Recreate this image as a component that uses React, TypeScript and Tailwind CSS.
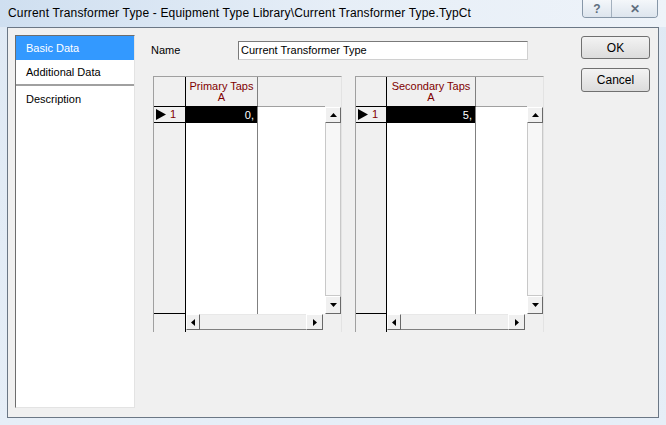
import React from 'react';

const Tri: React.FC<{ dir: 'up' | 'down' | 'left' | 'right' }> = ({ dir }) => {
  const pts =
    dir === 'up' ? '0,4 7,4 3.5,0' :
    dir === 'down' ? '0,0 7,0 3.5,4' :
    dir === 'left' ? '4,0 4,7 0,3.5' : '0,0 0,7 4,3.5';
  const w = dir === 'up' || dir === 'down' ? 7 : 4;
  const h = dir === 'up' || dir === 'down' ? 4 : 7;
  return (
    <svg width={w} height={h} viewBox={`0 0 ${w} ${h}`}>
      <polygon points={pts} fill="#000" />
    </svg>
  );
};

const ScrollBtn: React.FC<{ dir: 'up' | 'down' | 'left' | 'right'; className: string }> = ({ dir, className }) => (
  <div className={`flex items-center justify-center bg-[#f0f0f0] border-t border-l border-t-white border-l-white border-r border-b border-r-[#696969] border-b-[#696969] ${className}`}>
    <Tri dir={dir} />
  </div>
);

interface GridProps {
  title: string;
  value: string;
  a: string;
  b: string;
  c: string;
}

const TapGrid: React.FC<GridProps> = ({ title, value, a, b, c }) => (
  <div className="flex border-t border-l border-[#a0a0a0] border-r border-r-[#e3e3e3] h-[256px]">
    {/* row header column */}
    <div className={`flex flex-col border-r border-black bg-[#f0f0f0] ${a}`}>
      <div className="h-[30px] border-b border-black" />
      <div className="h-[16px] border-b border-black flex items-center pl-[2px] gap-[4px]">
        <svg width="10" height="11" viewBox="0 0 10 11"><polygon points="0,0 0,11 10,5.5" fill="#000" /></svg>
        <span className="text-[#800000]">1</span>
      </div>
      <div className="h-[191px] border-b border-black" />
      <div className="h-[18px]" />
    </div>
    {/* data columns */}
    <div className="flex flex-col">
      <div className="flex h-[30px]">
        <div className={`bg-[#f0f0f0] border-r border-b border-r-[#808080] border-b-black flex flex-col items-center justify-center leading-[11px] text-[#800000] ${b}`}>
          <span>{title}</span>
          <span>A</span>
        </div>
        <div className={`bg-[#f0f0f0] border-b border-[#a0a0a0] ${c}`} />
      </div>
      <div className="flex h-[16px]">
        <div className={`bg-black text-white text-right pr-[3px] leading-[16px] border-r border-[#808080] ${b}`}>{value}</div>
        <div className={`bg-white ${c}`} />
      </div>
      <div className="flex h-[191px]">
        <div className={`bg-white border-r border-[#808080] ${b}`} />
        <div className={`bg-white ${c}`} />
      </div>
      <div className="h-[18px] bg-[#f0f0f0] flex flex-col">
        <div className="flex h-[16px] mr-[2px] bg-[#f0f0f0]">
          <ScrollBtn dir="left" className="w-[14px]" />
          <div className="flex-1 bg-[#f0f0f0] border-b border-[#808080] border-t border-t-[#e8e8e8]" />
          <ScrollBtn dir="right" className="w-[17px]" />
        </div>
      </div>
    </div>
    {/* vertical scroll */}
    <div className="flex flex-col w-[16px] bg-[#f0f0f0]">
      <div className="h-[30px]" />
      <ScrollBtn dir="up" className="h-[16px]" />
      <div className="h-[173px] bg-[#f7f7f7] border-l border-r border-b border-[#c8c8c8]" />
      <ScrollBtn dir="down" className="h-[18px]" />
      <div className="h-[18px]" />
    </div>
  </div>
);

export default function App() {
  return (
    <div className="w-[666px] h-[425px] overflow-hidden bg-gradient-to-b from-[#dfe9f4] to-[#e6eef7] font-['Liberation_Sans',Arial,sans-serif] text-[11px] text-black flex flex-col">
      {/* title bar */}
      <div className="h-[27px] flex items-start bg-gradient-to-r from-[#cfdff0] via-[#e6eef7] to-[#eef3f9]">
        <span className="ml-[8px] mt-[5px] text-[12px] tracking-[0.17px] text-black leading-[16px]">
          Current Transformer Type - Equipment Type Library\Current Transformer Type.TypCt
        </span>
        <div className="ml-auto mr-[8px] flex h-[18px] border border-t-0 border-[#8797a8] rounded-b-[4px] overflow-hidden">
          <div className="w-[29px] flex items-center justify-center border-r border-[#a3b0be] bg-gradient-to-b from-[#f4f7fa] to-[#dde5ee] text-[#5f6e7e] text-[12px] font-bold">?</div>
          <div className="w-[45px] flex items-center justify-center bg-gradient-to-b from-[#f4f7fa] to-[#dde5ee] text-[#5f6e7e] text-[12px] font-bold">✕</div>
        </div>
      </div>
      {/* client area */}
      <div className="ml-[7px] w-[652px] h-[391px] border border-[#6b7785] bg-[#f0f0f0] flex">
        {/* list */}
        <div className="ml-[7px] mt-[7px] w-[120px] h-[373px] bg-white border-t border-l border-[#6d6d6d] border-r border-b border-r-[#e3e3e3] border-b-[#e3e3e3] flex flex-col">
          <div className="h-[24px] bg-[#3399ff] text-white pl-[10px] leading-[24px]">Basic Data</div>
          <div className="h-[26px] pl-[10px] leading-[25px] border-b-2 border-[#a0a0a0]">Additional Data</div>
          <div className="h-[26px] pl-[10px] leading-[26px]">Description</div>
        </div>
        {/* main */}
        <div className="ml-[16px] flex flex-col">
          <div className="mt-[13px] flex items-center h-[19px]">
            <span className="w-[87px]">Name</span>
            <div className="w-[290px] h-[19px] bg-white border border-[#7a7a7a] border-r-[#d0d0d0] border-b-[#d0d0d0] pl-[2px] leading-[17px]">
              Current Transformer Type
            </div>
          </div>
          <div className="mt-[16px] ml-[2px] flex gap-[13px]">
            <TapGrid title="Primary Taps" value="0," a="w-[32px]" b="w-[72px]" c="w-[67px]" />
            <TapGrid title="Secondary Taps" value="5," a="w-[31px]" b="w-[89px]" c="w-[51px]" />
          </div>
        </div>
        {/* buttons */}
        <div className="ml-[37px] mt-[8px] flex flex-col gap-[9px]">
          <button className="w-[69px] h-[23px] border border-[#707070] rounded-[3px] bg-gradient-to-b from-[#f3f3f3] to-[#dcdcdc] text-[12px]">OK</button>
          <button className="w-[69px] h-[24px] border border-[#707070] rounded-[3px] bg-gradient-to-b from-[#f3f3f3] to-[#dcdcdc] text-[12px]">Cancel</button>
        </div>
      </div>
    </div>
  );
}
